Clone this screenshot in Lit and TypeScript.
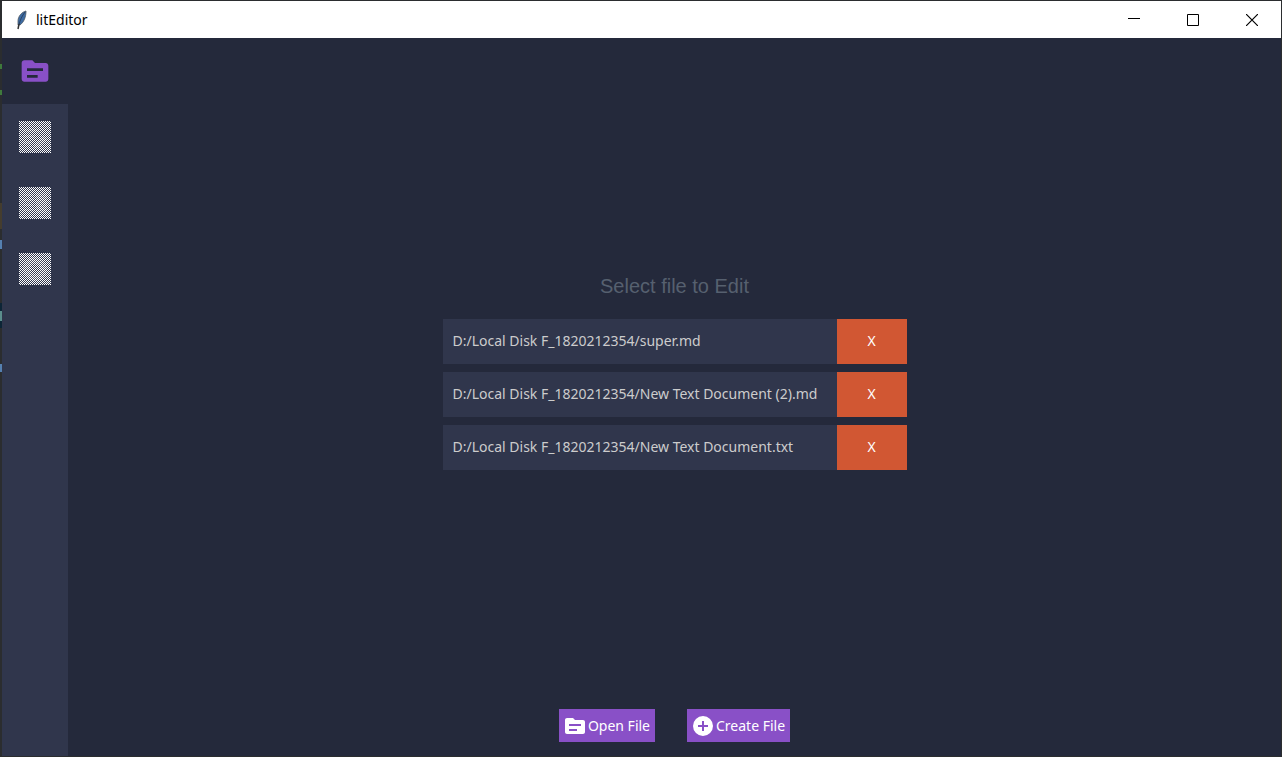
import { LitElement, html, css, svg } from "lit";
import { customElement, state } from "lit/decorators.js";

const folderIcon = svg`<path fill-rule="evenodd" d="M20 6h-8l-2-2H4c-1.100 0-2 .9-2 2v12c0 1.100.9 2 2 2h16c1.100 0 2-.9 2-2V8c0-1.100-.9-2-2-2zM14 17H6v-2h8v2zM18 12H6v-2h12v2z"/>`;
const addIcon = svg`<path fill-rule="evenodd" d="M12 2a10 10 0 1 0 0 20a10 10 0 1 0 0-20zM17 13h-4v4h-2v-4H7v-2h4V7h2v4h4z"/>`;

const disabledTabs = [
  { name: "Editor", icon: svg`<path d="M4 8h16v3H4zM4 14h12v3H4zM4 20h8v3H4zM15 23v4h4l9-9-4-4z"/>` },
  { name: "Preview", icon: svg`<path d="M4 7h10v2H4zM4 12h10v2H4zM4 17h10v2H4zM4 22h10v2H4zM17 6h11v20H17z"/>` },
  { name: "Settings", icon: svg`<path fill-rule="evenodd" d="M16 4a12 12 0 1 0 0 24a12 12 0 1 0 0-24zM16 11a5 5 0 1 1 0 10a5 5 0 1 1 0-10z"/>` },
];

@customElement("app-root")
export class AppRoot extends LitElement {
  @state() private files = [
    "D:/Local Disk F_1820212354/super.md",
    "D:/Local Disk F_1820212354/New Text Document (2).md",
    "D:/Local Disk F_1820212354/New Text Document.txt",
  ];

  static styles = css`
    :host {
      display: flex;
      flex-direction: column;
      box-sizing: border-box;
      min-height: 100vh;
      border: solid #2b2d2f;
      border-width: 1px 1px 1px 0;
      padding-left: 2px;
      background:
        linear-gradient(
          #2b2d2f 63px, #3f7a3c 63px 68px, #2b2d2f 68px 89px,
          #3f7a3c 89px 94px, #2b2d2f 94px 202px, #453d2e 202px 228px,
          #2b2d2f 228px 239px, #5580b0 239px 248px, #2b2d2f 248px 302px,
          #0c2536 302px 310px, #5b8d8c 310px 320px, #0c2536 320px 327px,
          #2b2d2f 327px 363px, #5580b0 363px 371px, #2b2d2f 371px
        ) left top / 2px 100% no-repeat,
        #24293b;
      color: #cccccc;
      font: 14px/20px "Noto Sans", "Open Sans", sans-serif;
    }
    button {
      margin: 0;
      padding: 0;
      border: 0;
      background: none;
      color: inherit;
      font: inherit;
    }
    svg { display: block; }
    .titlebar {
      display: flex;
      align-items: center;
      height: 37px;
      background: #ffffff;
      color: #000000;
    }
    .feather { margin: 0 6px 0 12px; }
    .title { flex: 1; margin: 0; font: inherit; }
    .control {
      display: flex;
      align-items: center;
      justify-content: center;
      width: 59px;
      height: 36px;
    }
    .body { display: flex; flex: 1; }
    .sidebar {
      display: flex;
      flex-direction: column;
      width: 66px;
      background: #30364c;
    }
    .tab {
      display: grid;
      place-items: center;
      height: 66px;
    }
    .tab.active { background: #24293b; }
    .main {
      flex: 1;
      display: flex;
      flex-direction: column;
      align-items: center;
      padding-bottom: 14px;
    }
    .picker {
      flex: 1;
      display: flex;
      flex-direction: column;
      justify-content: center;
      gap: 8px;
      min-width: 464px;
      padding-bottom: 4px;
    }
    .heading {
      margin: 0 0 13px;
      font: 20px/24px "Liberation Sans", Arial, sans-serif;
      color: #56606f;
      text-align: center;
    }
    .row { display: flex; height: 45px; }
    .path {
      flex: 1;
      padding: 0 12px 0 10px;
      background: #30364c;
      text-align: left;
    }
    .remove {
      width: 70px;
      background: #d15733;
      color: #ffffff;
    }
    .actions { display: flex; gap: 32px; }
    .action {
      display: flex;
      align-items: center;
      gap: 1px;
      height: 33px;
      padding: 0 5px 0 4px;
      background: #8950c7;
      color: #ffffff;
    }
  `;

  private remove(file: string) {
    this.files = this.files.filter((f) => f !== file);
  }

  render() {
    return html`
      <header class="titlebar">
        <svg class="feather" width="16" height="22" viewBox="0 0 16 22">
          <path d="M12 2C8 3 4 7 4 12l0 4 2 0C10 13 12 8 12 2z" fill="#3d6ba3" stroke="#4b5560" stroke-width=".8"/>
          <path d="M11 3C8 7 6 11 5 16" fill="none" stroke="#263c58" stroke-width=".9"/>
          <path d="M5 15L4 20" fill="none" stroke="#333" stroke-width="1.500"/>
        </svg>
        <h1 class="title">litEditor</h1>
        <button class="control" aria-label="Minimize">
          <svg width="12" height="12"><path d="M0 4.500h12" stroke="#000"/></svg>
        </button>
        <button class="control" aria-label="Maximize">
          <svg width="12" height="12"><path d="M.5.5h11v11H.5z" fill="none" stroke="#000"/></svg>
        </button>
        <button class="control" aria-label="Close">
          <svg width="12" height="12"><path d="M0 0l12 12M12 0L0 12" stroke="#000" stroke-width="1.200"/></svg>
        </button>
      </header>
      <div class="body">
        <nav class="sidebar">
          <button class="tab active" aria-label="Files">
            <svg width="32" height="32" viewBox="0 0 24 24" fill="#8950c7">${folderIcon}</svg>
          </button>
          ${disabledTabs.map(
            ({ name, icon }) => html`<button class="tab" disabled aria-label=${name}>
              <svg width="32" height="32" shape-rendering="crispEdges">
                <defs>
                  <pattern id="stipple" width="2" height="2" patternUnits="userSpaceOnUse">
                    <path d="M0 0h1v1H0zM1 1h1v1H1z" fill="#fff"/>
                  </pattern>
                </defs>
                <g fill="#fff" fill-opacity=".12">${icon}</g>
                <rect width="32" height="32" fill="url(#stipple)"/>
              </svg>
            </button>`
          )}
        </nav>
        <main class="main">
          <section class="picker">
            <h2 class="heading">Select file to Edit</h2>
            ${this.files.map(
              (file) => html`<div class="row">
                <button class="path">${file}</button>
                <button class="remove" @click=${() => this.remove(file)}>X</button>
              </div>`
            )}
          </section>
          <footer class="actions">
            <button class="action">
              <svg width="24" height="24" viewBox="0 0 24 24" fill="#fff">${folderIcon}</svg>Open File
            </button>
            <button class="action">
              <svg width="24" height="24" viewBox="0 0 24 24" fill="#fff">${addIcon}</svg>Create File
            </button>
          </footer>
        </main>
      </div>
    `;
  }
}
